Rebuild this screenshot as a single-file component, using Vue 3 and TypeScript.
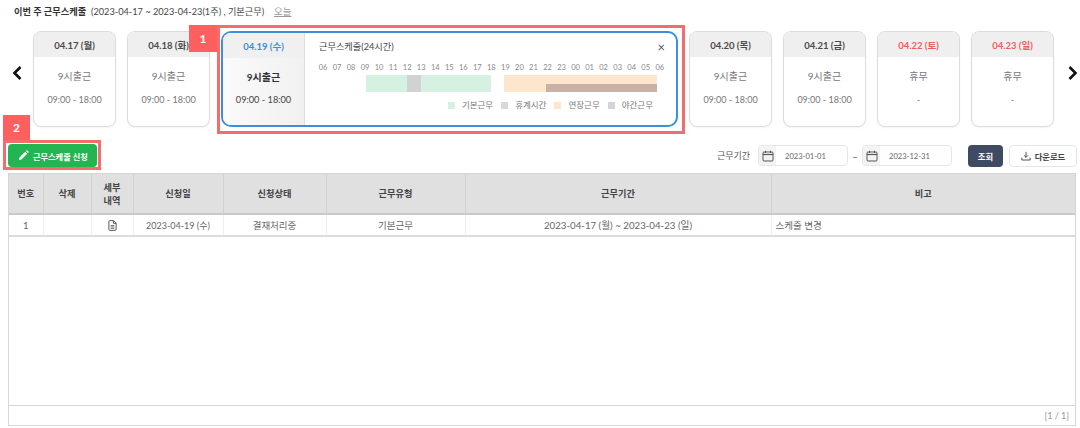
<script setup lang="ts">
interface Day { date: string; title: string; time: string; off?: boolean }
const before: Day[] = [
  { date: '04.17 (월)', title: '9시출근', time: '09:00 - 18:00' },
  { date: '04.18 (화)', title: '9시출근', time: '09:00 - 18:00' },
]
const after: Day[] = [
  { date: '04.20 (목)', title: '9시출근', time: '09:00 - 18:00' },
  { date: '04.21 (금)', title: '9시출근', time: '09:00 - 18:00' },
  { date: '04.22 (토)', title: '휴무', time: '-', off: true },
  { date: '04.23 (일)', title: '휴무', time: '-', off: true },
]
const hours = ['06','07','08','09','10','11','12','13','14','15','16','17','18','19','20','21','22','23','00','01','02','03','04','05','06']
const bars = [
  { color: '#d4f1e1', col: '4 / 13', row: '1 / 3' },
  { color: '#d2d2d4', col: '7 / 8', row: '1 / 3' },
  { color: '#fde7cc', col: '14 / 25', row: '1 / 3' },
  { color: '#c9b1a6', col: '17 / 25', row: '2 / 3' },
]
const legend = [
  { color: '#d4f1e1', label: '기본근무' },
  { color: '#d8d8d8', label: '휴계시간' },
  { color: '#fde7cc', label: '연장근무' },
  { color: '#d3d3da', label: '야간근무' },
]
const heads = ['번호', '삭제', '세부\n내역', '신청일', '신청상태', '근무유형', '근무기간', '비고']
const widths = [34, 48, 42, 90, 103, 139, 306, 304]
</script>

<template>
  <div class="page">
    <div class="title-row">
      <strong class="title">이번 주 근무스케줄</strong>
      <span class="range">(2023-04-17 ~ 2023-04-23(1주) , 기본근무)</span>
      <a class="today">오늘</a>
    </div>

    <div class="week">
      <svg class="arrow" viewBox="0 0 12 16" width="12" height="16"><path d="M9.5 2 L3.5 8 L9.5 14" fill="none" stroke="#111" stroke-width="2.6" /></svg>
      <div class="cards">
        <div v-for="d in before" :key="d.date" class="card">
          <div class="card-head">{{ d.date }}</div>
          <div class="card-body"><span>{{ d.title }}</span><span class="time">{{ d.time }}</span></div>
        </div>

        <div class="open">
          <span class="mark mark-box"></span>
          <span class="badge badge-1">1</span>
          <div class="open-side">
            <div class="open-head">04.19 (수)</div>
            <div class="open-body"><b>9시출근</b><span class="time-strong">09:00 - 18:00</span></div>
          </div>
          <div class="open-main">
            <div class="open-title"><span>근무스케줄(24시간)</span><span class="close">×</span></div>
            <div class="hours"><span v-for="(h, i) in hours" :key="i">{{ h }}</span></div>
            <div class="track">
              <i v-for="b in bars" :key="b.col + b.row" :style="{ background: b.color, gridColumn: b.col, gridRow: b.row }"></i>
            </div>
            <div class="legend">
              <span v-for="l in legend" :key="l.label"><i :style="{ background: l.color }"></i>{{ l.label }}</span>
            </div>
          </div>
        </div>

        <div v-for="d in after" :key="d.date" class="card">
          <div class="card-head" :class="{ red: d.off }">{{ d.date }}</div>
          <div class="card-body"><span>{{ d.title }}</span><span class="time">{{ d.time }}</span></div>
        </div>
      </div>
      <svg class="arrow" viewBox="0 0 12 16" width="12" height="16"><path d="M2.5 2 L8.5 8 L2.5 14" fill="none" stroke="#111" stroke-width="2.6" /></svg>
    </div>

    <div class="tools">
      <div class="apply-wrap">
        <span class="badge badge-2">2</span>
        <button class="apply">
          <svg viewBox="0 0 12 12" width="11" height="11"><path d="M1 11 L1.6 8.2 L7.8 2 L10 4.2 L3.8 10.4 Z M8.6 1.2 L9.3 .5 Q9.8 0 10.3 .5 L11.5 1.7 Q12 2.2 11.5 2.7 L10.8 3.4 Z" fill="#fff" /></svg>
          근무스케줄 신청
        </button>
      </div>
      <div class="filters">
        <label class="f-label">근무기간</label>
        <div class="date">
          <span class="cal"><svg viewBox="0 0 12 12" width="12" height="12"><rect x="1" y="2" width="10" height="9" rx="1" fill="none" stroke="#555" /><path d="M1 4.5H11" stroke="#555" stroke-width="1.2" /><path d="M3.5 .8V3M8.5 .8V3" stroke="#555" /></svg></span>
          <span>2023-01-01</span>
        </div>
        <span class="dash">–</span>
        <div class="date">
          <span class="cal"><svg viewBox="0 0 12 12" width="12" height="12"><rect x="1" y="2" width="10" height="9" rx="1" fill="none" stroke="#555" /><path d="M1 4.5H11" stroke="#555" stroke-width="1.2" /><path d="M3.5 .8V3M8.5 .8V3" stroke="#555" /></svg></span>
          <span>2023-12-31</span>
        </div>
        <button class="search">조회</button>
        <button class="download">
          <svg viewBox="0 0 12 12" width="10" height="10"><path d="M6 1V7.5M3.5 5.2 L6 7.7 L8.5 5.2M1 8V10.8H11V8" fill="none" stroke="#444" stroke-width="1.1" /></svg>
          다운로드
        </button>
      </div>
    </div>

    <div class="table-box">
      <div class="table-fill">
        <table>
          <colgroup><col v-for="(w, i) in widths" :key="i" :style="{ width: w + 'px' }" /></colgroup>
          <thead>
            <tr><th v-for="h in heads" :key="h">{{ h }}</th></tr>
          </thead>
          <tbody>
            <tr>
              <td>1</td>
              <td></td>
              <td>
                <svg class="doc" viewBox="0 0 10 12" width="9" height="11"><path d="M1 1.5Q1 .6 2 .6H6.3L9 3.3V10.4Q9 11.4 8 11.4H2Q1 11.4 1 10.4Z M6 .8V3.6H9" fill="none" stroke="#555" stroke-width="1.1" /><path d="M3 6H7M3 7.6H7M3 9.2H7" stroke="#555" stroke-width=".9" /></svg>
              </td>
              <td class="small">2023-04-19 (수)</td>
              <td>결재처리중</td>
              <td>기본근무</td>
              <td class="wide">2023-04-17 (월) ~ 2023-04-23 (일)</td>
              <td class="left">스케줄 변경</td>
            </tr>
          </tbody>
        </table>
      </div>
      <div class="pager">[1 / 1]</div>
    </div>
  </div>
</template>

<style>
html, body { margin: 0; background: #fff; }
</style>

<style scoped>
.page {
  width: 1080px;
  height: 428px;
  overflow: hidden;
  box-sizing: border-box;
  padding: 3px 4px 0 8px;
  font-family: Lato, "Noto Sans CJK KR", sans-serif;
  font-size: 10px;
  color: #555;
}
.title-row { display: flex; align-items: center; height: 15px; padding-left: 6px; }
.title { font-size: 9.2px; font-weight: 700; color: #333; width: 77px; white-space: nowrap; }
.range { font-size: 9.2px; color: #444; width: 183px; white-space: nowrap; }
.today { font-size: 9.5px; color: #999; text-decoration: underline; }

.week { display: flex; align-items: center; margin-top: 13px; }
.arrow { flex: none; margin-bottom: 12px; }
.week > .arrow:first-child { margin-left: 3px; margin-right: 10px; }
.week > .arrow:last-child { margin-left: 13px; }
.cards { display: flex; gap: 11px; flex: none; }

.card {
  width: 83px;
  height: 96px;
  box-sizing: border-box;
  border: 1px solid #dcdcdc;
  border-radius: 8px;
  overflow: hidden;
  background: #fff;
  box-shadow: 0 1px 2px rgba(0,0,0,.05);
}
.card-head {
  height: 25px;
  background: #efefef;
  display: flex; align-items: center; justify-content: center;
  font-size: 9.5px; font-weight: 700; color: #4a4a4a;
}
.card-head.red { color: #ef5d5d; }
.card-body {
  display: flex; flex-direction: column; align-items: center;
  padding-top: 12px; gap: 10px;
  font-size: 10px; color: #777; line-height: 14px;
}
.time { font-size: 9px; }

.open {
  position: relative;
  width: 457px;
  height: 96px;
  box-sizing: border-box;
  border: 2px solid #3b8fdc;
  border-radius: 10px;
  display: flex;
  background: #fff;
}
.mark-box {
  position: absolute;
  inset: -8px -9px -9px -6px;
  border: 3px solid #f26d6d;
  pointer-events: none;
}
.badge {
  position: absolute;
  display: flex; align-items: center; justify-content: center;
  background: #ff5f5f;
  color: #fff;
  font-size: 12px; font-weight: 700;
}
.badge-1 { left: -34px; top: -8px; width: 28px; height: 27px; }
.open-side {
  width: 81px;
  flex: none;
  background: linear-gradient(90deg, #fafafa, #f1f1f1);
  border-right: 1px solid #ddd;
  border-radius: 8px 0 0 8px;
  overflow: hidden;
}
.open-head {
  height: 25px;
  background: #f0f0f0;
  display: flex; align-items: center; justify-content: center;
  font-size: 9.5px; font-weight: 700; color: #3b8fdc;
}
.open-body {
  display: flex; flex-direction: column; align-items: center;
  padding-top: 12px; gap: 9px;
  font-size: 10px; line-height: 14px; color: #444;
}
.open-body b { color: #333; }
.time-strong { font-size: 9.2px; }
.open-main { flex: 1; padding: 6px 14px 0 14px; min-width: 0; }
.open-title {
  display: flex; justify-content: space-between; align-items: center;
  font-size: 9.2px; color: #444; height: 14px;
}
.close { font-size: 13px; color: #555; line-height: 14px; margin-right: -3px; margin-top: 2px; }
.hours {
  display: flex;
  justify-content: space-between;
  margin-top: 9px;
  font-size: 7.5px; color: #888; height: 11px; line-height: 11px;
  width: 347px;
  margin-left: -1px;
}
.hours span { width: 10px; text-align: center; }
.track {
  display: grid;
  grid-template-columns: repeat(24, 1fr);
  grid-template-rows: 8.5px 8.5px;
  width: 333px;
  margin-top: 2px;
  margin-left: 5px;
}
.legend {
  display: flex;
  justify-content: flex-end;
  gap: 8px;
  margin-top: 7px;
  font-size: 8.5px; color: #777;
  line-height: 12px;
  width: 334px;
}
.legend span { display: flex; align-items: center; }
.legend i { width: 7px; height: 7px; margin-right: 7px; }

.tools {
  display: flex; align-items: center; justify-content: space-between;
  height: 23px;
  margin-top: 17px;
}
.apply-wrap { position: relative; }
.apply-wrap::after {
  content: '';
  position: absolute;
  inset: -4px -4px -3px -5px;
  border: 3px solid #f26d6d;
  pointer-events: none;
}
.badge-2 { left: -5px; top: -29px; width: 27px; height: 25px; }
.apply {
  display: flex; align-items: center; gap: 4px;
  width: 89px; height: 23px;
  border: 0; border-radius: 4px;
  background: #22b552;
  color: #fff;
  font: 700 8.2px Lato, "Noto Sans CJK KR", sans-serif;
  padding: 0 0 0 10px;
  white-space: nowrap;
}
.filters { display: flex; align-items: center; margin-right: -1px; }
.f-label { font-size: 9px; color: #555; margin-right: 8px; }
.date {
  display: flex; align-items: center;
  width: 90px; height: 21px;
  box-sizing: border-box;
  border: 1px solid #e6e6e6;
  border-radius: 4px;
  font-size: 7.6px; color: #666;
}
.cal {
  width: 17px; height: 19px;
  display: flex; align-items: center; justify-content: center;
  background: #f3f3f3;
  margin-right: 9px;
  border-radius: 3px 0 0 3px;
}
.dash { width: 14px; text-align: center; color: #666; }
.search {
  width: 35px; height: 22px;
  margin-left: 16px;
  border: 0; border-radius: 4px;
  background: #3f4a63; color: #fff;
  font: 700 8.3px Lato, "Noto Sans CJK KR", sans-serif;
  padding: 0;
}
.download {
  display: flex; align-items: center; justify-content: center; gap: 4px;
  width: 68px; height: 22px;
  margin-left: 6px;
  box-sizing: border-box;
  border: 1px solid #e6e6e6; border-radius: 4px;
  background: #fff; color: #444;
  font: 700 8.3px Lato, "Noto Sans CJK KR", sans-serif;
  padding: 0;
}

.table-box {
  margin-top: 6px;
  width: 1068px;
  height: 253px;
  box-sizing: border-box;
  border: 1px solid #d6d6d6;
  display: flex; flex-direction: column;
}
.table-fill { flex: 1; min-height: 0; }
.pager {
  height: 19px;
  border-top: 1px solid #d6d6d6;
  text-align: right;
  padding-right: 6px;
  font-size: 9px; line-height: 19px; color: #999;
}
table { width: 100%; table-layout: fixed; border-collapse: collapse; }
th {
  height: 39px;
  padding: 0;
  background: #e0e0e0;
  border-right: 1px solid #d2d2d2;
  border-bottom: 2px solid #c9c9c9;
  font-size: 9.2px; font-weight: 700; color: #444;
  white-space: pre-line;
  line-height: 13px;
}
td {
  height: 20px;
  padding: 0;
  text-align: center;
  border-right: 1px solid #eee;
  border-bottom: 2px solid #dcdcdc;
  font-size: 9.5px; color: #666;
}
td.small { font-size: 9px; }
td.wide { font-size: 9.7px; }
th:last-child, td:last-child { border-right: 0; }
td.left { text-align: left; padding-left: 4px; }
.doc { display: block; margin: 0 auto; }
</style>
